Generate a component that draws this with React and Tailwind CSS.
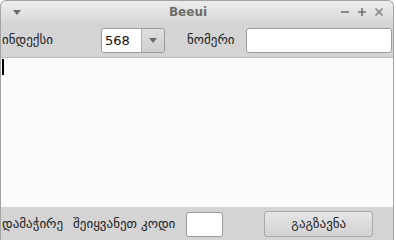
import { useState } from 'react'

const FONT = { fontFamily: '"DejaVu Sans", "Noto Sans", sans-serif' }

function TitleBar() {
  return (
    <div className="relative h-[22px] rounded-t-[6px] border border-b-0 border-[#a3a3a3] bg-gradient-to-b from-[#ededed] to-[#d9d9d9] flex items-center">
      <svg width="8" height="5" viewBox="0 0 8 5" className="ml-[12px] mt-[2px]">
        <path d="M0 0 H8 L4 5 Z" fill="#6a6a6a" />
      </svg>
      <div className="flex-1 text-center text-[12px] font-bold text-[#6b6b6b] pl-[14px]" style={FONT}>Beeui</div>
      <div className="flex items-center gap-[9px] mr-[10px] mt-[1px]">
        <svg width="8" height="8" viewBox="0 0 8 8"><path d="M0 4 H8" stroke="#707070" strokeWidth="1.6" /></svg>
        <svg width="8" height="8" viewBox="0 0 8 8"><path d="M0 4 H8 M4 0 V8" stroke="#707070" strokeWidth="1.6" /></svg>
        <svg width="8" height="8" viewBox="0 0 8 8"><path d="M0.5 0.5 L7.5 7.5 M7.5 0.5 L0.5 7.5" stroke="#8a8a8a" strokeWidth="1.6" /></svg>
      </div>
    </div>
  )
}

export default function App() {
  const [index] = useState('568')

  return (
    <div className="w-[396px] h-[240px] bg-white overflow-hidden" style={FONT}>
      <div className="w-[394px] h-[240px] flex flex-col">
        <TitleBar />

        {/* top row */}
        <div className="h-[35px] bg-[#d4d4d4] border-l border-r border-[#a3a3a3] flex items-center text-[13px] text-[#1e1e1e]">
          <span className="ml-[1px] w-[99px]">ინდექსი</span>
          <div className="flex h-[25px] w-[64px] rounded-[3px] border border-[#9c9c9c] overflow-hidden mt-[2px]">
            <div className="w-[39px] bg-white flex items-center pl-[3px] text-[13px] text-[#111]">{index}</div>
            <div className="flex-1 border-l border-[#b0b0b0] bg-gradient-to-b from-[#dedede] to-[#cfcfcf] flex items-center justify-center">
              <svg width="8" height="5" viewBox="0 0 8 5"><path d="M0 0 H8 L4 5 Z" fill="#6a6a6a" /></svg>
            </div>
          </div>
          <span className="ml-[22px] w-[59px]">ნომერი</span>
          <div className="h-[25px] flex-1 mr-[1px] rounded-[3px] border border-[#9c9c9c] bg-white mt-[2px]"></div>
        </div>

        {/* text area */}
        <div className="flex-1 bg-[#fcfcfc] border-t border-[#bcbcbc] border-l border-r border-l-[#a3a3a3] border-r-[#a3a3a3] relative">
          <div className="absolute left-[1px] top-[1px] w-[2px] h-[16px] bg-black"></div>
        </div>

        {/* bottom row */}
        <div className="h-[33px] bg-[#d4d4d4] border-l border-r border-[#a3a3a3] flex items-center text-[13px] text-[#1e1e1e]">
          <span className="ml-[1px]">დამაჭირე</span>
          <span className="ml-[10px]">შეიყვანეთ კოდი</span>
          <div className="ml-[11px] h-[25px] w-[37px] rounded-[3px] border border-[#9c9c9c] bg-white mt-[1px]"></div>
          <button className="ml-[41px] h-[26px] w-[109px] rounded-[3px] border border-[#a8a8a8] bg-gradient-to-b from-[#e6e6e6] to-[#d2d2d2] text-[13px] text-[#1e1e1e] mt-[1px]">გაგზავნა</button>
        </div>
      </div>
    </div>
  )
}
